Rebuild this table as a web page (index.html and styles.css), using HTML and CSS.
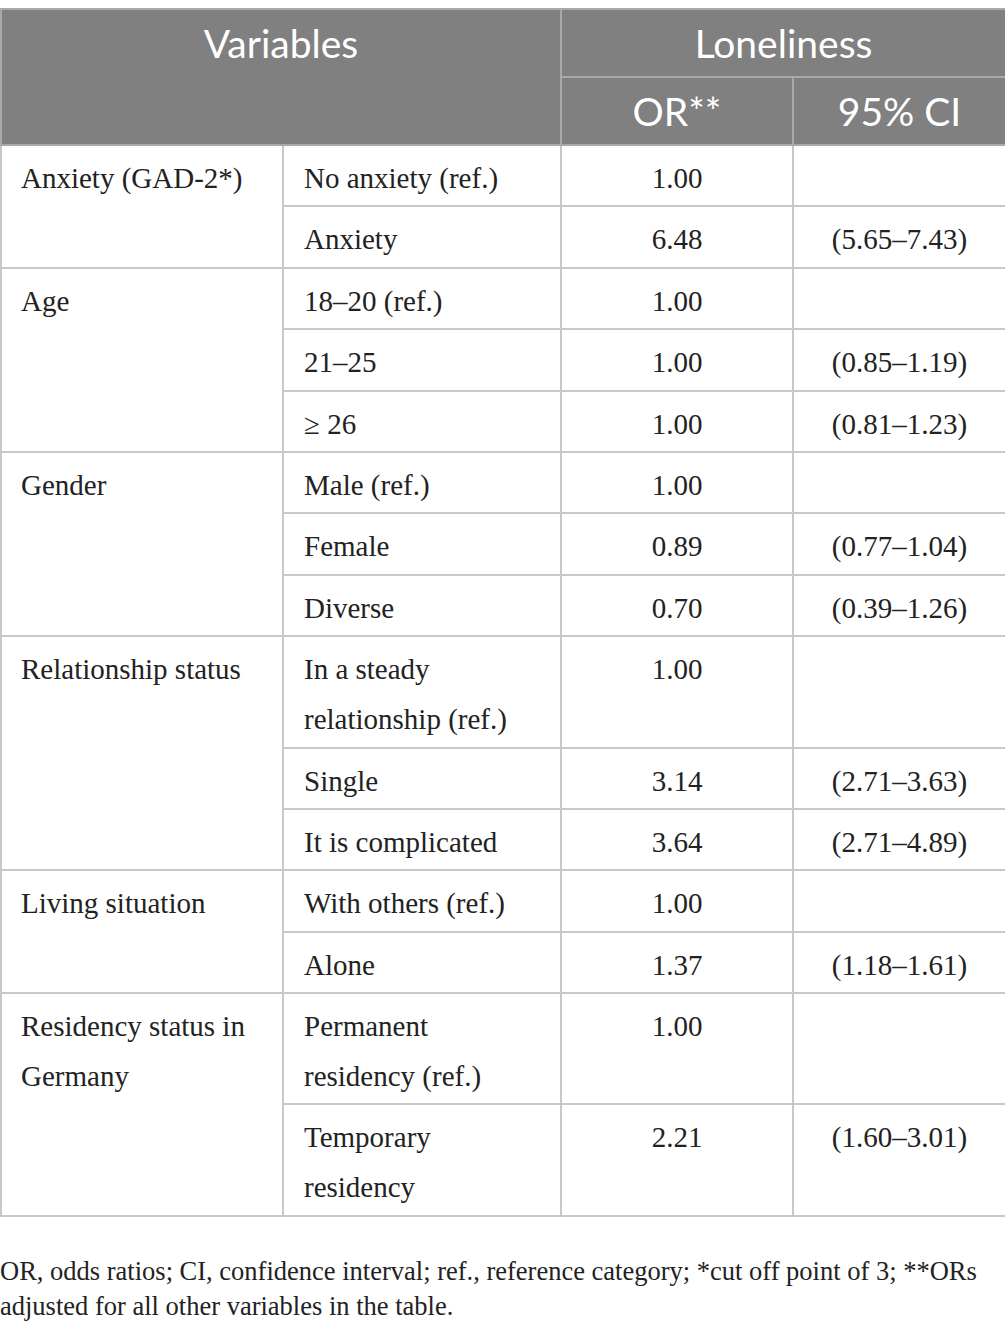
FILE: index.html
```html
<!DOCTYPE html>
<html>
<head>
<meta charset="utf-8">
<link rel="stylesheet" href="styles.css">
</head>
<body>
<table class="data">
  <colgroup>
    <col class="c1"><col class="c2"><col class="c3"><col class="c4">
  </colgroup>
  <thead>
    <tr>
      <th colspan="2" rowspan="2" class="top">Variables</th>
      <th colspan="2">Loneliness</th>
    </tr>
    <tr>
      <th>OR**</th>
      <th>95% CI</th>
    </tr>
  </thead>
  <tbody>
    <tr><td rowspan="2" class="grp">Anxiety (GAD-2*)</td><td>No anxiety (ref.)</td><td class="num">1.00</td><td class="num"></td></tr>
    <tr><td>Anxiety</td><td class="num">6.48</td><td class="num">(5.65–7.43)</td></tr>
    <tr><td rowspan="3" class="grp">Age</td><td>18–20 (ref.)</td><td class="num">1.00</td><td class="num"></td></tr>
    <tr><td>21–25</td><td class="num">1.00</td><td class="num">(0.85–1.19)</td></tr>
    <tr><td>≥ 26</td><td class="num">1.00</td><td class="num">(0.81–1.23)</td></tr>
    <tr><td rowspan="3" class="grp">Gender</td><td>Male (ref.)</td><td class="num">1.00</td><td class="num"></td></tr>
    <tr><td>Female</td><td class="num">0.89</td><td class="num">(0.77–1.04)</td></tr>
    <tr><td>Diverse</td><td class="num">0.70</td><td class="num">(0.39–1.26)</td></tr>
    <tr><td rowspan="3" class="grp">Relationship status</td><td>In a steady<br>relationship (ref.)</td><td class="num">1.00</td><td class="num"></td></tr>
    <tr><td>Single</td><td class="num">3.14</td><td class="num">(2.71–3.63)</td></tr>
    <tr><td>It is complicated</td><td class="num">3.64</td><td class="num">(2.71–4.89)</td></tr>
    <tr><td rowspan="2" class="grp">Living situation</td><td>With others (ref.)</td><td class="num">1.00</td><td class="num"></td></tr>
    <tr><td>Alone</td><td class="num">1.37</td><td class="num">(1.18–1.61)</td></tr>
    <tr><td rowspan="2" class="grp">Residency status in<br>Germany</td><td>Permanent<br>residency (ref.)</td><td class="num">1.00</td><td class="num"></td></tr>
    <tr><td>Temporary<br>residency</td><td class="num">2.21</td><td class="num">(1.60–3.01)</td></tr>
  </tbody>
</table>
<p class="note">OR, odds ratios; CI, confidence interval; ref., reference category; *cut off point of 3; **ORs adjusted for all other variables in the table.</p>
</body>
</html>
```

FILE: styles.css
```css
html, body {
  margin: 0;
  padding: 0;
  background: #ffffff;
}
body {
  padding-top: 8px;
  width: 1005px;
}
.data {
  width: 1005px;
  border-collapse: collapse;
  table-layout: fixed;
  font-family: "Liberation Serif", "Times New Roman", serif;
  font-size: 29px;
  color: #222222;
}
.c1 { width: 282px; }
.c2 { width: 278px; }
.c3 { width: 232px; }
.c4 { width: 213px; }
.data th {
  background: #7f807f;
  color: #ffffff;
  font-family: Lato, "Open Sans", sans-serif;
  font-weight: 400;
  font-size: 39px;
  line-height: 50px;
  padding: 8px 10px 8px 10px;
  border: 2px solid #a9a9a9;
  text-align: center;
  vertical-align: middle;
}
.data th.top {
  vertical-align: top;
}
.data td {
  border: 2px solid #c8c8c8;
  padding: 7px 10px 2.4px 20px;
  line-height: 50px;
  vertical-align: top;
  text-align: left;
}
.data td.grp {
  padding-left: 19px;
}
.data td.num {
  text-align: center;
  padding-left: 10px;
}
.note {
  margin: 37px 0 0 0;
  font-family: "Liberation Serif", "Times New Roman", serif;
  font-size: 26.5px;
  line-height: 35px;
  color: #222222;
}
```
